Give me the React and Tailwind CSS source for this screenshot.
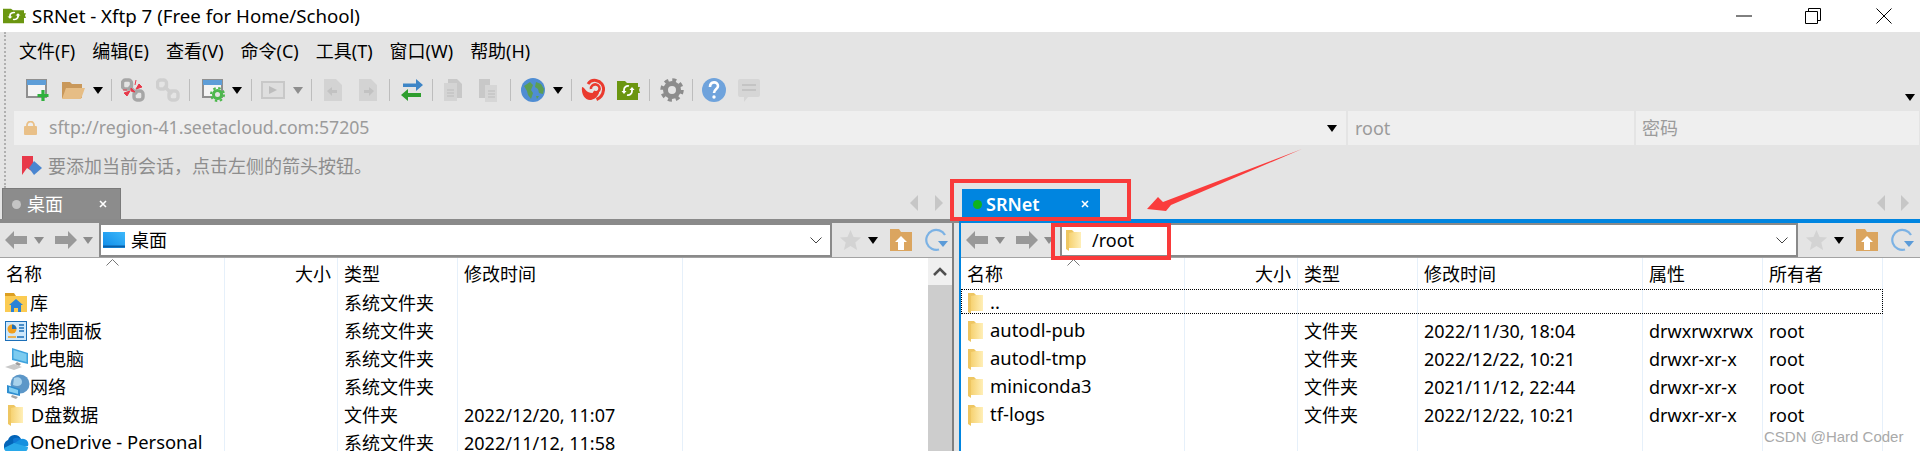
import React from 'react';

const Caret = ({ color = '#000', className = '' }) => (
  <svg width="10" height="7" viewBox="0 0 10 7" className={className}><path d="M0 0h10L5 7z" fill={color} /></svg>
);

const Sep = ({ className = '' }) => <div className={`w-px h-[22px] bg-[#bdbdbd] ${className}`} />;

const Tool = ({ children, className = '' }) => (
  <svg width="24" height="24" viewBox="0 0 24 24" className={`shrink-0 ${className}`}>{children}</svg>
);

const Chain = ({ color }) => (
  <g fill="none" stroke={color} strokeWidth="3.4">
    <rect x="1.5" y="2" width="9" height="9" rx="3" />
    <rect x="13" y="13" width="9" height="9" rx="3" />
    <path d="M8 8l8 8" />
  </g>
);

const XftpFolder = () => (
  <g>
    <path d="M1 3h8l2 2h11v4h2l-1 3 1 3h-2v7H1z" fill="#6b9610" />
    <path d="M13 8a4 4 0 0 0-5 4v2M11 17a4 4 0 0 0 5-4v-2" stroke="#fff" strokeWidth="1.8" fill="none" />
    <path d="M5.5 13h5L8 16zM13.500 12h5L16 9z" fill="#fff" />
  </g>
);

const TabArrow = ({ dir, className = '' }) => (
  <svg width="8" height="16" viewBox="0 0 8 16" className={className}>
    <path d={dir === 'l' ? 'M8 0v16L0 8z' : 'M0 0v16l8-8z'} fill="#c6c6c6" />
  </svg>
);

const TabClose = ({ className = '' }) => (
  <svg width="8" height="8" viewBox="0 0 8 8" className={className}>
    <path d="M1 1l6 6M7 1L1 7" stroke="#fff" strokeWidth="1.6" />
  </svg>
);

const Folder = ({ id }) => (
  <svg width="15" height="24" viewBox="0 0 15 24" className="shrink-0">
    <defs>
      <linearGradient id={id} x1="0" x2="1" y1="0" y2="0">
        <stop offset="0" stopColor="#f6d272" />
        <stop offset="1" stopColor="#ffefb8" />
      </linearGradient>
    </defs>
    <path d="M0 2h6l2 2h7v16H3v3l-3-2z" fill="#eec662" />
    <path d="M3 5l5-1h7v16H3z" fill={`url(#${id})`} />
  </svg>
);

const LibraryIcon = () => (
  <svg width="22" height="22" viewBox="0 0 22 22" className="shrink-0">
    <path d="M0 1h9l2 3H0z" fill="#dc9f22" />
    <path d="M0 4h22v16H0z" fill="#fbcb52" />
    <path d="M11 7l7 6h-2v7h-3v-4H9v4H6v-7H4z" fill="#2a82d6" />
  </svg>
);

const PanelIcon = () => (
  <svg width="22" height="20" viewBox="0 0 22 20" className="shrink-0">
    <rect x="0.5" y="0.5" width="21" height="19" fill="#cfe8fb" stroke="#1c6fb8" />
    <circle cx="7" cy="8" r="4.500" fill="#f0a020" />
    <path d="M7 8V3.500A4.500 4.500 0 0 1 11.500 8z" fill="#1c6fb8" />
    <path d="M14 4h5M14 7h5M14 10h5" stroke="#1c6fb8" strokeWidth="1.500" />
    <path d="M3 16h8" stroke="#f0a020" strokeWidth="1.500" />
    <path d="M12 16h7" stroke="#1c6fb8" strokeWidth="1.500" />
  </svg>
);

const PcIcon = () => (
  <svg width="24" height="24" viewBox="0 0 24 24" className="shrink-0">
    <path d="M7 1l16 5v11L7 13z" fill="#3ea2dd" />
    <path d="M8.500 3l13 4v8l-13-3.500z" fill="#7ccbf0" />
    <path d="M12 15l4 2-2 2-4-2z" fill="#9a9a9a" />
    <path d="M0 20l9-3 8 3-8 3z" fill="#c9c9c9" />
  </svg>
);

const NetIcon = () => (
  <svg width="24" height="26" viewBox="0 0 24 26" className="shrink-0">
    <circle cx="14" cy="10" r="9.500" fill="#5c97c8" />
    <path d="M8 4c4-2 8 0 8 4s-5 5-9 3z" fill="#a8d2ec" />
    <path d="M1 11l13 4v7L1 19z" fill="#2f8ed0" />
    <path d="M3 13l9 3v4l-9-2.500z" fill="#86d0f3" />
    <path d="M6 21l6 2-2 2-5-2z" fill="#a5a5a5" />
  </svg>
);

const OneDriveIcon = () => (
  <svg width="25" height="18" viewBox="0 0 25 18" className="shrink-0">
    <path d="M4 6a7 7 0 0 1 13-1l-8 7-9 3c-1-4 1-8 4-9z" fill="#0364b8" />
    <path d="M9 5a7 7 0 0 1 9 1l-8 8z" fill="#0f78d4" />
    <path d="M17 5a5.500 5.500 0 0 1 7 7l-9 2-6-4z" fill="#1490df" />
    <path d="M0 14l10-5 14 4c0 3-2 5-4 5H4c-2 0-4-2-4-4z" fill="#28a8ea" />
  </svg>
);

const NavArrow = ({ dir }) => (
  <svg width="22" height="18" viewBox="0 0 22 18" className="shrink-0">
    <path d={dir === 'l' ? 'M9 0v5h13v8H9v5L0 9z' : 'M13 0v5H0v8h13v5l9-9z'} fill="#999" />
  </svg>
);

const NavBar = ({ icon, label, labelClass, endPad }) => (
  <div className={`h-[35px] shrink-0 flex items-center pl-[5px] bg-[#e4e4e4] border-b border-[#a3a3a3] ${endPad}`}>
    <NavArrow dir="l" />
    <Caret color="#8c8c8c" className="ml-[7px]" />
    <div className="ml-[11px]"><NavArrow dir="r" /></div>
    <Caret color="#8c8c8c" className="ml-[6px]" />
    <div className="ml-[6px] flex-1 h-[34px] bg-white border-2 border-[#8a8a8a] flex items-center">
      {icon}
      <span className={`text-[18px] text-black ${labelClass}`}>{label}</span>
      <svg width="12" height="7" viewBox="0 0 12 7" className="ml-auto mr-[8px]"><path d="M0.500 0.500L6 6l5.500-5.500" stroke="#444" fill="none" /></svg>
    </div>
    <svg width="21" height="20" viewBox="0 0 21 20" className="ml-[8px] shrink-0"><path d="M10.500 0l3 7 7.500.6-5.700 4.900 1.800 7.500-6.600-4-6.600 4 1.800-7.500L0 7.600 7.500 7z" fill="#d3d3d3" /></svg>
    <Caret className="ml-[7px]" />
    <svg width="22" height="22" viewBox="0 0 22 22" className="ml-[12px] shrink-0">
      <path d="M0 0h9l2 3h11v19H0z" fill="#dba55f" />
      <path d="M11 7l6 6h-3v8H8v-8H5z" fill="#fff" />
    </svg>
    <svg width="24" height="24" viewBox="0 0 24 24" className="ml-[12px] shrink-0">
      <path d="M21 7A10 10 0 1 0 15 21.500" stroke="#7cb2e4" strokeWidth="2.200" fill="none" />
      <path d="M14 13h10l-5 6z" fill="#5b9bd8" />
    </svg>
  </div>
);

const leftCols = 'grid-cols-[225px_113px_120px_225px_1fr]';
const rightCols = 'grid-cols-[224px_113px_120px_225px_120px_120px_1fr]';

const Cell = ({ children, className = 'pl-[6px]', last }) => (
  <div className={`flex items-center pt-px min-w-0 whitespace-nowrap ${last ? '' : 'border-r border-[#e6f0fa]'} ${className}`}>{children}</div>
);

const HeaderRow = ({ cols, titles }) => (
  <div className={`relative h-[30px] shrink-0 grid ${cols}`}>
    {titles.map((t, i) => (
      <Cell key={i} last={i === titles.length - 1} className={t === '大小' ? 'justify-end pr-[6px]' : 'pl-[6px]'}>{t}</Cell>
    ))}
    <svg width="13" height="7" viewBox="0 0 13 7" className="absolute left-[106px] top-[1px]"><path d="M0.500 6.500L6.500 0.500l6 6" stroke="#777" fill="none" /></svg>
  </div>
);

const Row = ({ cols, cells, icon, focus, nameClass, nameSize = '' }) => (
  <div className={`relative h-[28px] shrink-0 grid ${cols}`}>
    <Cell className={nameClass}>{icon}<span className={nameSize}>{cells[0]}</span></Cell>
    {cells.slice(1).map((c, i) => (
      <Cell key={i} last={i === cells.length - 2}>{c}</Cell>
    ))}
    {focus && <span className="absolute left-0 right-[37px] top-[1px] bottom-[2px] border border-dotted border-black" />}
  </div>
);

const Filler = ({ cols, n }) => (
  <div className={`flex-1 grid ${cols}`}>
    {Array.from({ length: n }).map((_, i) => <Cell key={i} last={i === n - 1} />)}
  </div>
);

const leftFiles = [
  { icon: <LibraryIcon />, cells: ['库', '', '系统文件夹', '', ''], pad: 'pl-[5px] gap-[3px]' },
  { icon: <PanelIcon />, cells: ['控制面板', '', '系统文件夹', '', ''], pad: 'pl-[5px] gap-[3px]' },
  { icon: <PcIcon />, cells: ['此电脑', '', '系统文件夹', '', ''], pad: 'pl-[5px] gap-px' },
  { icon: <NetIcon />, cells: ['网络', '', '系统文件夹', '', ''], pad: 'pl-[6px] gap-0' },
  { icon: <Folder id="fl" />, cells: ['D盘数据', '', '文件夹', '2022/12/20, 11:07', ''], pad: 'pl-[8px] gap-[8px]' },
  { icon: <OneDriveIcon />, cells: ['OneDrive - Personal', '', '系统文件夹', '2022/11/12, 11:58', ''], pad: 'pl-[4px] gap-px', size: 'text-[18.4px]' },
];

const rightFiles = [
  ['..', '', '', '', '', '', ''],
  ['autodl-pub', '', '文件夹', '2022/11/30, 18:04', 'drwxrwxrwx', 'root', ''],
  ['autodl-tmp', '', '文件夹', '2022/12/22, 10:21', 'drwxr-xr-x', 'root', ''],
  ['miniconda3', '', '文件夹', '2021/11/12, 22:44', 'drwxr-xr-x', 'root', ''],
  ['tf-logs', '', '文件夹', '2022/12/22, 10:21', 'drwxr-xr-x', 'root', ''],
];

export default function App() {
  return (
    <div className="relative w-[1920px] h-[451px] overflow-hidden bg-white text-black text-[18px] leading-none font-['Noto_Sans','Noto_Sans_CJK_SC',sans-serif]">
      {/* title bar */}
      <div className="h-[32px] flex items-center bg-white">
        <svg width="25" height="16" viewBox="0 2 25 21" preserveAspectRatio="none" className="ml-[2px]"><XftpFolder /></svg>
        <span className="ml-[5px] text-[18.7px]">SRNet - Xftp 7 (Free for Home/School)</span>
        <svg width="16" height="2" className="ml-auto"><path d="M0 1h16" stroke="#000" /></svg>
        <svg width="16" height="16" viewBox="0 0 16 16" className="ml-[53px]"><path d="M3.500 3.500V.5h12v12h-3M.5 3.500h12v12H.5z" stroke="#000" fill="none" /></svg>
        <svg width="16" height="16" viewBox="0 0 16 16" className="ml-[55px] mr-[28px]"><path d="M.5.5l15 15M15.500.5l-15 15" stroke="#000" fill="none" /></svg>
      </div>

      {/* menu, toolbar, address and hint */}
      <div className="h-[156px] flex bg-[#e4e4e4]">
        <div className="ml-[4px] w-[2px] border-l-2 border-dotted border-[#b0b0b0]" />
        <div className="flex-1 min-w-0 flex flex-col">
          <div className="h-[38px] flex items-center pl-[13px] gap-[17px] whitespace-nowrap">
            {['文件(F)', '编辑(E)', '查看(V)', '命令(C)', '工具(T)', '窗口(W)', '帮助(H)'].map((m) => <span key={m}>{m}</span>)}
          </div>

          <div className="relative h-[41px] flex items-center pl-[19px] pb-[1px]">
            <Tool>
              <rect x="2" y="2" width="19" height="17" fill="#f4f4f4" stroke="#8f8f8f" strokeWidth="2" />
              <rect x="2" y="2" width="19" height="5" fill="#5e9ed8" />
              <path d="M18 12v11M12.500 17.500h11" stroke="#2fb03c" strokeWidth="3.200" />
            </Tool>
            <Tool className="ml-[12px]">
              <path d="M1 4h8l2 2h10v14H1z" fill="#c9985a" />
              <path d="M5 10h19l-4 11H1z" fill="#e6bd85" />
            </Tool>
            <Caret className="ml-[8px]" />
            <Sep className="ml-[8px]" />
            <Tool className="ml-[9px]">
              <Chain color="#a6a6a6" />
              <path d="M3 15l6-2-3 5zM21 9l-6 2 3-5zM10 10l4 4-4-1zM15 2l-1 5M2 12l4 0" fill="#e8394a" stroke="#e8394a" />
            </Tool>
            <Tool className="ml-[11px]"><Chain color="#cfcfcf" /></Tool>
            <Sep className="ml-[9px]" />
            <Tool className="ml-[11px]">
              <rect x="2" y="2" width="19" height="17" fill="#f4f4f4" stroke="#8f8f8f" strokeWidth="2" />
              <rect x="2" y="2" width="19" height="5" fill="#5e9ed8" />
              <circle cx="16.500" cy="16.500" r="4" fill="#e4e4e4" stroke="#4cb84c" strokeWidth="3" />
              <circle cx="16.500" cy="16.500" r="6.500" fill="none" stroke="#4cb84c" strokeWidth="2" strokeDasharray="2.500 2.600" />
            </Tool>
            <Caret className="ml-[7px]" />
            <Sep className="ml-[9px]" />
            <Tool className="ml-[9px]">
              <rect x="1" y="4" width="22" height="16" fill="#dedede" stroke="#c8c8c8" strokeWidth="2" />
              <path d="M8 8v8l8-4z" fill="#bdbdbd" />
            </Tool>
            <Caret color="#8e8e8e" className="ml-[8px]" />
            <Sep className="ml-[8px]" />
            <Tool className="ml-[9px]">
              <path d="M3 1h12l6 6v16H3z" fill="#d3d3d3" />
              <path d="M6 13l5-4v3h5v3h-5v3z" fill="#c2c2c2" />
            </Tool>
            <Tool className="ml-[11px]">
              <path d="M3 1h12l6 6v16H3z" fill="#d3d3d3" />
              <path d="M18 13l-5-4v3H8v3h5v3z" fill="#c2c2c2" />
            </Tool>
            <Sep className="ml-[9px]" />
            <Tool className="ml-[10px]">
              <path d="M3 5.500h13V1l7 6-7 6V9H3z" fill="#3d85c6" />
              <path d="M21 15H8v-4l-7 6 7 6v-4h13z" fill="#2e9e2e" />
            </Tool>
            <Sep className="ml-[8px]" />
            <Tool className="ml-[8px]">
              <path d="M7 1h9l5 5v14H7z" fill="#c8c8c8" />
              <path d="M3 5h13v18H3z" fill="#d4d4d4" />
              <path d="M6 12h7M6 15h7M6 18h7" stroke="#bcbcbc" />
            </Tool>
            <Tool className="ml-[11px]">
              <path d="M3 1h11v19H3z" fill="#c8c8c8" />
              <path d="M9 7h12v17H9z" fill="#d6d6d6" />
              <path d="M12 13h7M12 16h7M12 19h7" stroke="#bcbcbc" />
            </Tool>
            <Sep className="ml-[10px]" />
            <Tool className="ml-[10px]">
              <circle cx="12" cy="12" r="12" fill="#4f8dd3" />
              <path d="M3 8l6-4 3 3-2 5 2 3-2 6-3-4-1-4zM15 4l5 2 3 5-1 5-4-1-1-4-3-2zM15 18l3 0-2 3z" fill="#5c9e52" />
            </Tool>
            <Caret className="ml-[8px]" />
            <Sep className="ml-[8px]" />
            <Tool className="ml-[9px]">
              <path d="M1 9c2 0 3 3 6 5 4 2 9 1 11-2v3c-2 5-6 7-9 7-5 0-9-6-8-13z" fill="#ea3a2e" />
              <path d="M7 6c2-3 5-4 8-3.500 5 .8 8 5 7.500 9.500-.5 4.500-3.500 8-7 9.500" stroke="#ea3a2e" strokeWidth="3" fill="none" />
              <path d="M10 11c-.5-2.500 2-5 5-4.500s4.500 3.500 3 6c-1.500 2-4 2.500-5.500 1" stroke="#ea3a2e" strokeWidth="2.600" fill="none" />
            </Tool>
            <Tool className="ml-[11px]"><XftpFolder /></Tool>
            <Sep className="ml-[9px]" />
            <Tool className="ml-[10px]">
              <circle cx="12" cy="12" r="6.500" fill="none" stroke="#8c8c8c" strokeWidth="5" />
              <circle cx="12" cy="12" r="10" fill="none" stroke="#8c8c8c" strokeWidth="3.500" strokeDasharray="4 3.850" />
            </Tool>
            <Sep className="ml-[8px]" />
            <Tool className="ml-[9px]">
              <circle cx="12" cy="12" r="12" fill="#6fa3dc" />
              <path d="M8 9c0-6 8-6 8-1 0 3-4 3-4 7" stroke="#fff" strokeWidth="2.600" fill="none" />
              <circle cx="12" cy="19" r="1.700" fill="#fff" />
            </Tool>
            <Tool className="ml-[11px]">
              <path d="M3 1h18a2 2 0 0 1 2 2v14a2 2 0 0 1-2 2H11l-4 5v-5H3a2 2 0 0 1-2-2V3a2 2 0 0 1 2-2z" fill="#d6d6d6" />
              <path d="M5 7h14M5 12h14" stroke="#c4c4c4" strokeWidth="2" />
            </Tool>
            <Caret className="absolute right-[5px] bottom-[10px]" />
          </div>

          <div className="h-[34px] ml-[8px] flex gap-[2px] text-[#9b9b9b]">
            <div className="w-[1332px] bg-[#efefef] flex items-center pl-[10px]">
              <svg width="13" height="14" viewBox="0 0 13 14"><path d="M3 6V4a3.500 3.500 0 0 1 7 0v2" stroke="#e9c088" strokeWidth="1.800" fill="none" /><rect y="5" width="13" height="9" rx="1" fill="#e9c088" /></svg>
              <span className="ml-[12px] text-[17.7px]">sftp://region-41.seetacloud.com:57205</span>
              <Caret className="ml-auto mr-[9px]" />
            </div>
            <div className="w-[286px] bg-[#efefef] flex items-center pl-[7px]">root</div>
            <div className="flex-1 bg-[#efefef] flex items-center pl-[6px] mr-px">密码</div>
          </div>

          <div className="flex-1 flex items-center pl-[16px] pb-[2px] text-[#8d8d8d]">
            <svg width="20" height="20" viewBox="0 0 20 20"><path d="M0 0h11v16l-6-4-5 7z" fill="#e8394a" /><path d="M12 5l8 7-8 7-5-7z" fill="#4a86d0" /></svg>
            <span className="ml-[6px]">要添加当前会话，点击左侧的箭头按钮。</span>
          </div>
        </div>
      </div>

      {/* panes */}
      <div className="h-[263px] flex">
        <div className="w-[959px] shrink-0 flex flex-col bg-[#e4e4e4]">
          <div className="h-[31px] shrink-0 flex items-end pl-[2px]">
            <div className="w-[119px] h-[31px] bg-[#8c8c8c] border-t border-x border-[#7a7a7a] flex items-center text-[#fff]">
              <span className="ml-[9px] w-[9px] h-[9px] rounded-full bg-[#c4c4c4]" />
              <span className="ml-[6px]">桌面</span>
              <TabClose className="ml-auto mr-[13px]" />
            </div>
            <TabArrow dir="l" className="ml-[789px] mb-[8px]" />
            <TabArrow dir="r" className="ml-[17px] mb-[8px]" />
          </div>
          <div className="h-[4px] shrink-0 bg-[#8a8a8a]" />
          <div className="flex-1 min-h-0 flex">
            <div className="w-[954px] shrink-0 flex flex-col border-r-2 border-[#808080]">
              <NavBar
                label="桌面"
                labelClass="ml-[6px]"
                endPad="pr-[4px]"
                icon={
                  <svg width="22" height="16" viewBox="0 0 22 16" className="ml-[2px]">
                    <defs><linearGradient id="dk" x1="0" y1="1" x2="1" y2="0"><stop offset="0" stopColor="#0f8be8" /><stop offset="1" stopColor="#3db8fa" /></linearGradient></defs>
                    <rect width="22" height="16" fill="url(#dk)" /><path d="M0 14.500h22" stroke="#0a5fa8" strokeWidth="2" />
                  </svg>
                }
              />
              <div className="flex-1 min-h-0 flex bg-white">
                <div className="flex-1 min-w-0 flex flex-col">
                  <HeaderRow cols={leftCols} titles={['名称', '大小', '类型', '修改时间', '']} />
                  {leftFiles.map((f) => <Row key={f.cells[0]} cols={leftCols} cells={f.cells} icon={f.icon} nameClass={f.pad} nameSize={f.size} />)}
                  <Filler cols={leftCols} n={5} />
                </div>
                <div className="w-[24px] shrink-0 flex flex-col bg-[#cdcdcd]">
                  <div className="h-[27px] bg-[#f0f0f0] flex items-center justify-center">
                    <svg width="14" height="9" viewBox="0 0 14 9"><path d="M1 8l6-6 6 6" stroke="#505050" strokeWidth="2.500" fill="none" /></svg>
                  </div>
                </div>
              </div>
            </div>
          </div>
        </div>

        <div className="flex-1 min-w-0 flex flex-col">
          <div className="h-[31px] shrink-0 flex items-end bg-[#e4e4e4]">
            <div className="ml-[3px] w-[138px] h-[30px] bg-[#0085e0] flex items-center text-white font-semibold">
              <span className="ml-[11px] w-[9px] h-[9px] rounded-full bg-[#0fb320]" />
              <span className="ml-[4px]">SRNet</span>
              <TabClose className="ml-auto mr-[11px]" />
            </div>
            <TabArrow dir="l" className="ml-[777px] mb-[8px]" />
            <TabArrow dir="r" className="ml-[16px] mb-[8px]" />
          </div>
          <div className="h-[4px] shrink-0 bg-[#0085e0]" />
          <div className="flex-1 min-h-0 flex flex-col border-l-2 border-[#0085e0]">
            <NavBar
              label="/root"
              labelClass="ml-[11px]"
              endPad="pr-[6px]"
              icon={<div className="ml-[4px]"><Folder id="fr" /></div>}
            />
            <div className="flex-1 min-h-0 flex flex-col bg-white">
              <HeaderRow cols={rightCols} titles={['名称', '大小', '类型', '修改时间', '属性', '所有者', '']} />
              {rightFiles.map((cells, i) => (
                <Row
                  key={cells[0]}
                  cols={rightCols}
                  cells={cells}
                  focus={i === 0}
                  nameClass="pl-[7px] gap-[7px]"
                  nameSize="text-[18.4px]"
                  icon={<Folder id={`f${i}`} />}
                />
              ))}
              <Filler cols={rightCols} n={7} />
            </div>
          </div>
        </div>
      </div>

      {/* annotations drawn over the screenshot */}
      <div className="absolute left-[950px] top-[179px] w-[181px] h-[42px] border-[4px] border-[#f93a3a]" />
      <div className="absolute left-[1051px] top-[223px] w-[120px] h-[37px] border-[4px] border-[#f93a3a]" />
      <svg width="170" height="70" viewBox="0 0 170 70" className="absolute left-[1140px] top-[145px]">
        <path d="M7 64L18 52l5 5L162 4 31 60l-5 6z" fill="#fa3c3c" />
      </svg>
      <span className="absolute left-[1764px] top-[429px] text-[15px] text-[#a9a9a9] font-['Liberation_Sans',sans-serif] whitespace-nowrap">CSDN @Hard Coder</span>
    </div>
  );
}
